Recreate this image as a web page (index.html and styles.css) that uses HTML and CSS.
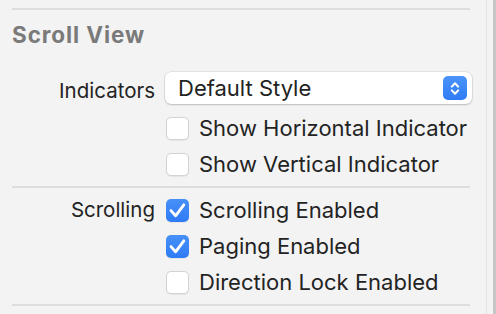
FILE: index.html
```html
<!DOCTYPE html>
<html>
<head>
<meta charset="utf-8">
<link rel="stylesheet" href="styles.css">
</head>
<body>
<div class="window">
  <div class="panel">
    <div class="sep sep-top"></div>
    <h2 class="title">Scroll View</h2>
    <div class="grid grid-ind">
      <div class="label label-popup">Indicators</div>
      <div class="popup">
        <span class="popup-text">Default Style</span>
        <span class="popup-arrows">
          <svg width="24" height="24" viewBox="0 0 24 24"><path d="M8.8 10.6 L12 7.2 L15.2 10.6 M8.8 14.4 L12 17.8 L15.2 14.4" fill="none" stroke="#fff" stroke-width="2" stroke-linecap="round" stroke-linejoin="round"/></svg>
        </span>
      </div>
      <div class="label"></div>
      <label class="check"><span class="box"></span><span>Show Horizontal Indicator</span></label>
      <div class="label"></div>
      <label class="check"><span class="box"></span><span>Show Vertical Indicator</span></label>
    </div>
    <div class="sep sep-mid"></div>
    <div class="grid grid-scroll">
      <div class="label">Scrolling</div>
      <label class="check"><span class="box on"><svg width="23" height="23" viewBox="0 0 23 23"><path d="M5 11.6 L9.6 16.8 L17.8 5.8" fill="none" stroke="#fff" stroke-width="2.8" stroke-linecap="round" stroke-linejoin="round"/></svg></span><span>Scrolling Enabled</span></label>
      <div class="label"></div>
      <label class="check"><span class="box on"><svg width="23" height="23" viewBox="0 0 23 23"><path d="M5 11.6 L9.6 16.8 L17.8 5.8" fill="none" stroke="#fff" stroke-width="2.8" stroke-linecap="round" stroke-linejoin="round"/></svg></span><span>Paging Enabled</span></label>
      <div class="label"></div>
      <label class="check"><span class="box"></span><span>Direction Lock Enabled</span></label>
    </div>
    <div class="sep sep-bot"></div>
  </div>
  <div class="edge"></div>
</div>
</body>
</html>
```

FILE: styles.css
```css
html, body {
  margin: 0;
  padding: 0;
  background: #f3f3f3;
}
.window {
  width: 496px;
  height: 314px;
  display: flex;
  font-family: Inter, "Liberation Sans", sans-serif;
  color: #232323;
  overflow: hidden;
}
.panel {
  width: 458px;
  padding-left: 12px;
  padding-right: 16px;
  border-right: 1px solid #e3e3e3;
}
.edge {
  margin-left: 6px;
  flex: 1;
  background: #c6c6c6;
}
.sep {
  height: 2px;
  background: #dddddd;
}
.sep-top { margin-top: 8px; }
.sep-mid { margin-top: 4px; }
.sep-bot { margin-top: 4px; }
.title {
  margin: 0;
  padding-top: 13px;
  font-size: 22.5px;
  line-height: 24px;
  font-weight: 700;
  color: #7a7a7a;
  letter-spacing: 0.9px;
}
.grid {
  display: grid;
  grid-template-columns: 143px 1fr;
  column-gap: 11px;
  align-items: center;
}
.grid-ind { margin-top: 25px; }
.grid-scroll { margin-top: 4px; }
.label {
  text-align: right;
  font-size: 20.5px;
  line-height: 24px;
  height: 24px;
}
.popup {
  margin-left: -1px;
  height: 32px;
  width: 307px;
  box-sizing: border-box;
  background: #fff;
  border-radius: 6px;
  box-shadow: 0 0 0 0.5px rgba(0,0,0,0.12), 0 1px 2px rgba(0,0,0,0.18);
  display: flex;
  align-items: center;
  justify-content: space-between;
  padding-left: 13px;
  padding-right: 5px;
  font-size: 22px;
  margin-bottom: 6px;
}
.popup-arrows {
  width: 24px;
  height: 24px;
  border-radius: 5px;
  background: linear-gradient(#4a93f8, #2f7cf6);
  display: flex;
}
.check {
  height: 36px;
  display: flex;
  align-items: center;
  gap: 10px;
  font-size: 22px;
  white-space: nowrap;
}
.box {
  width: 23px;
  height: 23px;
  box-sizing: border-box;
  border-radius: 5px;
  background: #fff;
  border: 1px solid #d3d3d3;
  box-shadow: 0 0.5px 1px rgba(0,0,0,0.06);
  flex: none;
  display: flex;
}
.box.on {
  border: none;
  background: linear-gradient(#4790f8, #2f7bf5);
}
```
